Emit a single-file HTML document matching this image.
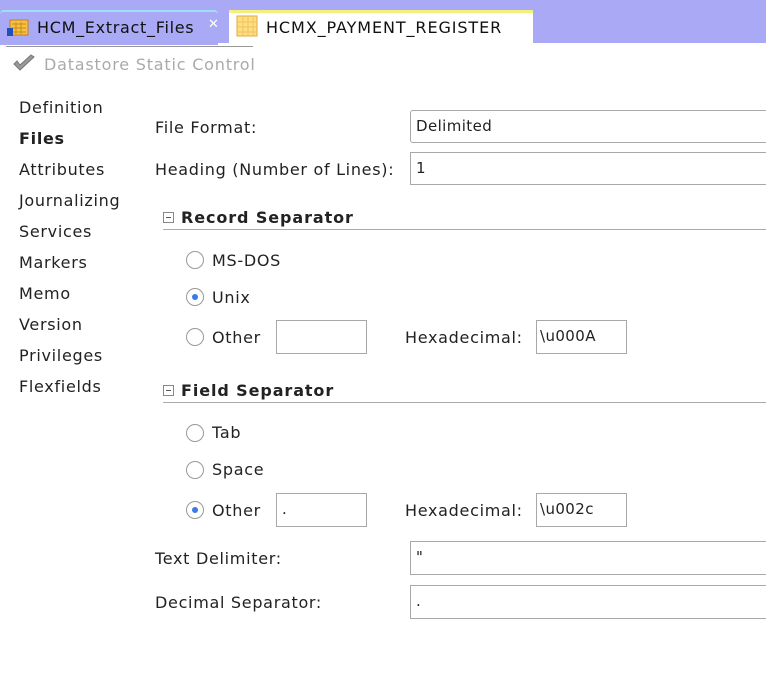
<!DOCTYPE html>
<html><head><style>
body{margin:0;width:766px;height:700px;background:#fff;position:relative;overflow:hidden;font-family:"DejaVu Sans","Liberation Sans",sans-serif;font-size:16px;letter-spacing:0.7px;color:#222}
.a{position:absolute;white-space:nowrap}
.t{position:absolute;line-height:18px;transform:translateY(-8px);white-space:nowrap}
.box{position:absolute;border:1px solid #a8a8a8;background:#fff;box-sizing:border-box;font-size:15px;letter-spacing:0.4px;padding:6px 5px 0 5px}
.r{position:absolute;width:18px;height:18px;border:1px solid #999;border-radius:50%;box-sizing:border-box;background:#fff}
.r.on::after{content:"";position:absolute;left:5px;top:5px;width:6px;height:6px;border-radius:50%;background:#3a7ae8}
.hd{position:absolute;font-weight:bold;font-size:16px;letter-spacing:0.9px;line-height:18px;white-space:nowrap}
.mn{position:absolute;width:11px;height:11px;border:1px solid #888;box-sizing:border-box}
.mn::after{content:"";position:absolute;left:2px;top:4px;width:5px;height:1px;background:#555}
.ln{position:absolute;height:1px;background:#aaa}
</style></head><body>
<div class="a" style="left:0;top:0;width:766px;height:43px;background:#a9a9f6"></div>
<div class="a" style="left:0;top:10px;width:218px;height:33px;background:#a9a9f6;border-top:2px solid #9ee0f0;border-radius:4px 4px 0 0"></div>
<div class="a" style="left:229px;top:10px;width:304px;height:34px;background:#fff;border-top:3px solid #f4f080"></div>
<svg class="a" style="left:6px;top:14px" width="24" height="24"><rect x="4" y="6" width="18" height="15" fill="#f6c040" stroke="#c08020"/><path d="M6 10h14M6 14h14M6 18h14M10 8v12M15 8v12" stroke="#c98a20"/><rect x="1" y="14" width="6" height="8" fill="#2050c0"/></svg>
<div class="t" style="left:37px;top:27px;color:#111">HCM_Extract_Files</div>
<div class="t" style="left:208px;top:24px;color:#fff;font-size:13px">✕</div>
<svg class="a" style="left:236px;top:15px" width="22" height="22"><rect x="1" y="1" width="20" height="20" fill="#fde080" stroke="#e0a840"/><path d="M1 7h20M1 12h20M1 17h20M7 1v20M12 1v20M17 1v20" stroke="#f4c060" stroke-width="1"/></svg>
<div class="t" style="left:266px;top:27px;color:#111;letter-spacing:0.9px">HCMX_PAYMENT_REGISTER</div>
<div class="ln" style="left:6px;top:46px;width:247px;background:#999"></div>
<svg class="a" style="left:12px;top:54px" width="24" height="18"><path d="M2 10 L8 16 L22 3 L19 1 L8 11 L5 7 Z" fill="#999" stroke="#777"/></svg>
<div class="t" style="left:44px;top:64px;color:#aaa;letter-spacing:0.8px">Datastore Static Control</div>

<div class="t" style="left:19px;top:107px">Definition</div>
<div class="t" style="left:19px;top:138px;font-weight:bold">Files</div>
<div class="t" style="left:19px;top:169px">Attributes</div>
<div class="t" style="left:19px;top:200px">Journalizing</div>
<div class="t" style="left:19px;top:231px">Services</div>
<div class="t" style="left:19px;top:262px">Markers</div>
<div class="t" style="left:19px;top:293px">Memo</div>
<div class="t" style="left:19px;top:324px">Version</div>
<div class="t" style="left:19px;top:355px">Privileges</div>
<div class="t" style="left:19px;top:386px">Flexfields</div>

<div class="t" style="left:155px;top:127px">File Format:</div>
<div class="box" style="left:410px;top:110px;width:370px;height:33px;border-radius:3px">Delimited</div>
<div class="t" style="left:155px;top:169px">Heading (Number of Lines):</div>
<div class="box" style="left:410px;top:152px;width:370px;height:33px">1</div>

<div class="mn" style="left:163px;top:212px"></div>
<div class="hd" style="left:181px;top:209px">Record Separator</div>
<div class="ln" style="left:163px;top:229px;width:603px"></div>
<div class="r" style="left:186px;top:251px"></div><div class="t" style="left:212px;top:260px">MS-DOS</div>
<div class="r on" style="left:186px;top:288px"></div><div class="t" style="left:212px;top:297px">Unix</div>
<div class="r" style="left:186px;top:328px"></div><div class="t" style="left:212px;top:337px">Other</div>
<div class="box" style="left:276px;top:320px;width:91px;height:34px"></div>
<div class="t" style="left:405px;top:337px">Hexadecimal:</div>
<div class="box" style="left:536px;top:320px;width:91px;height:34px;padding-left:3px">\u000A</div>

<div class="mn" style="left:163px;top:385px"></div>
<div class="hd" style="left:181px;top:382px">Field Separator</div>
<div class="ln" style="left:163px;top:402px;width:603px"></div>
<div class="r" style="left:186px;top:424px"></div><div class="t" style="left:212px;top:432px">Tab</div>
<div class="r" style="left:186px;top:461px"></div><div class="t" style="left:212px;top:469px">Space</div>
<div class="r on" style="left:186px;top:501px"></div><div class="t" style="left:212px;top:510px">Other</div>
<div class="box" style="left:276px;top:493px;width:91px;height:34px">.</div>
<div class="t" style="left:405px;top:510px">Hexadecimal:</div>
<div class="box" style="left:536px;top:493px;width:91px;height:34px;padding-left:3px">\u002c</div>

<div class="t" style="left:155px;top:558px">Text Delimiter:</div>
<div class="box" style="left:410px;top:541px;width:370px;height:34px">"</div>
<div class="t" style="left:155px;top:602px">Decimal Separator:</div>
<div class="box" style="left:410px;top:585px;width:370px;height:34px">.</div>
</body></html>
